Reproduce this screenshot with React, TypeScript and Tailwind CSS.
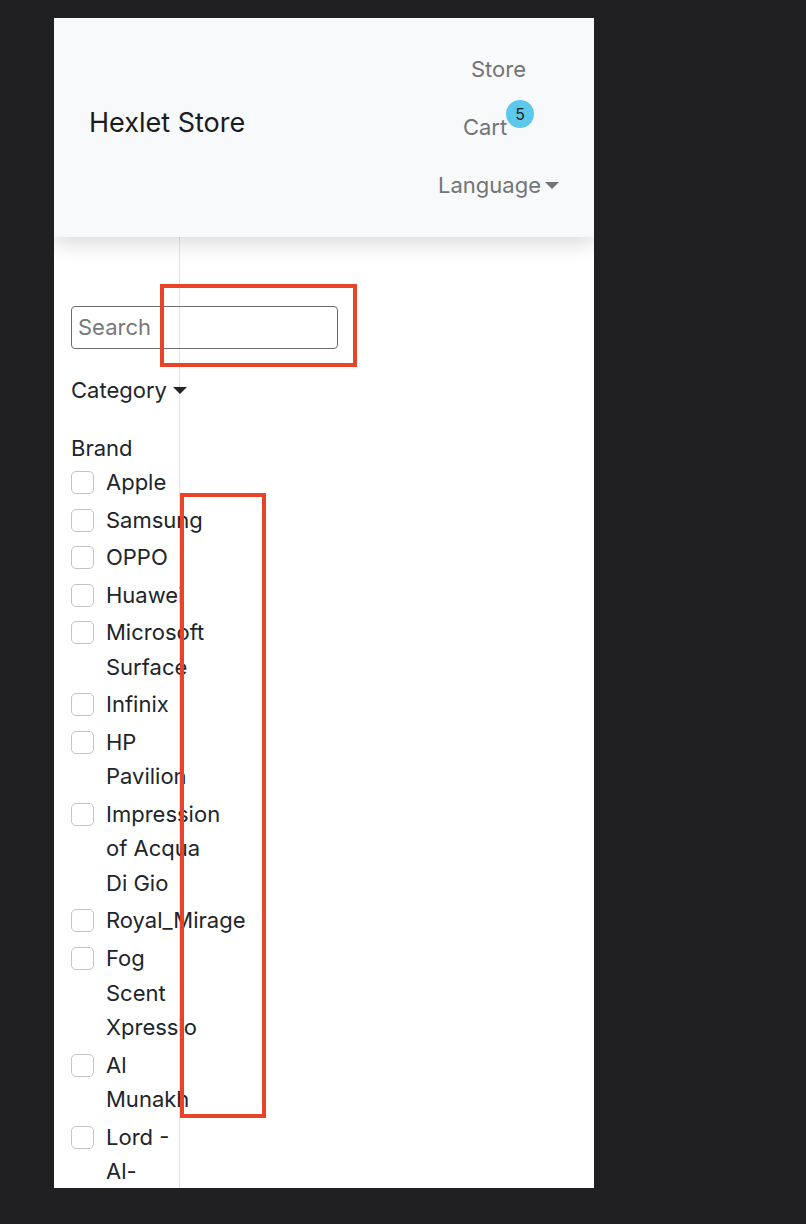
import React from "react";

const brands = [
  "Apple",
  "Samsung",
  "OPPO",
  "Huawei",
  "Microsoft Surface",
  "Infinix",
  "HP Pavilion",
  "Impression of Acqua Di Gio",
  "Royal_Mirage",
  "Fog Scent Xpressio",
  "Al Munakh",
  "Lord - Al-Rehab",
];

function Caret({ className = "" }: { className?: string }) {
  return (
    <span
      className={`inline-block h-0 w-0 border-x-[7px] border-t-[7px] border-x-transparent border-t-current ${className}`}
    />
  );
}

function Navbar() {
  return (
    <header className="relative z-10 flex h-[219px] items-center justify-between bg-[#f8f9fa] px-[35px] shadow-[0_8px_18px_rgba(0,0,0,0.13)]">
      <a className="mb-[10px] text-[27px] leading-[35px] text-[#1b1c1d]">Hexlet Store</a>
      <nav className="flex flex-col items-center text-[22px] leading-[35px] text-[#737476]">
        <a className="flex h-[58px] items-center">Store</a>
        <a className="flex h-[58px] items-center">
          Cart
          <span className="relative -top-[14px] ml-[-1px] flex h-[28px] w-[28px] items-center justify-center rounded-full bg-[#5cc8ec] text-[16px] leading-none text-[#1d1f21]">
            5
          </span>
        </a>
        <a className="flex h-[58px] items-center">
          Language
          <Caret className="ml-[4px]" />
        </a>
      </nav>
    </header>
  );
}

function Sidebar() {
  return (
    <aside className="h-full w-[126px] shrink-0 border-r-[1.5px] border-[#e3e3e8]">
      <div className="w-[300px] pl-[17px] pt-[69px] text-[22px] leading-[34.6px] text-[#212529]">
        <div className="flex h-[43px] w-[267px] items-center rounded-[4px] border-[1.5px] border-[#6d6d6d] px-[6px] text-[#77787a]">
          Search
        </div>
        <div className="mt-[24px] flex items-center">
          Category
          <Caret className="ml-[6px] text-[#212529]" />
        </div>
        <div className="mt-[23px]">Brand</div>
        <ul>
          {brands.map((b) => (
            <li key={b} className="mb-[2.9px] flex items-start">
              <span className="mt-[6px] h-[23px] w-[23px] shrink-0 rounded-[5px] border-[1.5px] border-[#c4c4c4] bg-white" />
              <span className="ml-[12px] w-[96px]">{b}</span>
            </li>
          ))}
        </ul>
      </div>
    </aside>
  );
}

export default function App() {
  return (
    <div
      className="min-h-[1224px] bg-[#202022] pl-[54px] pt-[18px]"
      style={{ fontFamily: "Inter, 'Noto Sans', sans-serif" }}
    >
      <div className="relative flex h-[1170px] w-[540px] flex-col overflow-hidden bg-white">
        <Navbar />
        <div className="flex min-h-0 flex-1">
          <Sidebar />
        </div>
        <div className="pointer-events-none absolute left-[106px] top-[266px] h-[83px] w-[197px] border-[4px] border-[#e9442a]" />
        <div className="pointer-events-none absolute left-[126px] top-[475px] h-[625px] w-[86px] border-[4px] border-[#e9442a]" />
      </div>
    </div>
  );
}
